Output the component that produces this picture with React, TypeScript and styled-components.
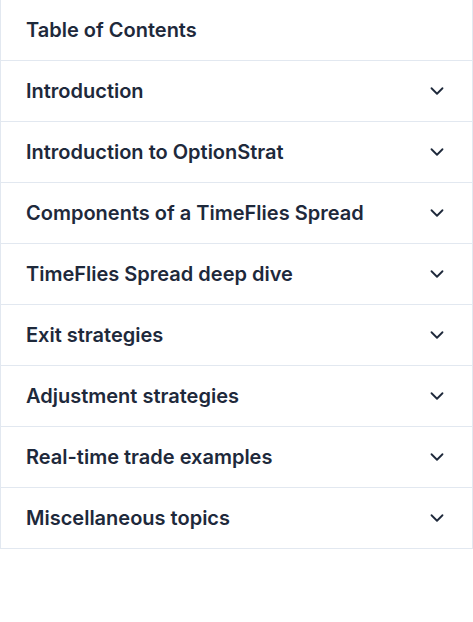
import React from 'react';
import styled, { createGlobalStyle } from 'styled-components';
import { ChevronDown } from 'lucide-react';

const sections = [
  'Introduction',
  'Introduction to OptionStrat',
  'Components of a TimeFlies Spread',
  'TimeFlies Spread deep dive',
  'Exit strategies',
  'Adjustment strategies',
  'Real-time trade examples',
  'Miscellaneous topics',
];

const App = () => {
  return (
    <>
      <GlobalStyle />
      <Container>
        <Header>
          <Title>Table of Contents</Title>
        </Header>
        {sections.map(section => (
          <Row key={section}>
            <Title>{section}</Title>
            <Chevron size={22} strokeWidth={2} />
          </Row>
        ))}
      </Container>
    </>
  );
};
export default App;

const GlobalStyle = createGlobalStyle`
  body {
    margin: 0;
    background: #ffffff;
    font-family: Inter, "Noto Sans", sans-serif;
  }
`;

const Container = styled.div`
  width: 100%;
  box-sizing: border-box;
  border-left: 1px solid #e2e8f0;
  border-right: 1px solid #e2e8f0;
  border-bottom: 1px solid #e2e8f0;
`;

const Header = styled.div`
  display: flex;
  align-items: center;
  height: 60px;
  padding: 0 25px;
  border-bottom: 1px solid #e2e8f0;
`;

const Row = styled.div`
  display: flex;
  align-items: center;
  justify-content: space-between;
  height: 60px;
  padding: 0 24px 0 25px;
  & + & {
    border-top: 1px solid #e2e8f0;
  }
`;

const Title = styled.h3`
  margin: 0;
  font-size: 20px;
  font-weight: 600;
  color: #1e293b;
`;

const Chevron = styled(ChevronDown)`
  color: #1e293b;
  flex-shrink: 0;
`;
